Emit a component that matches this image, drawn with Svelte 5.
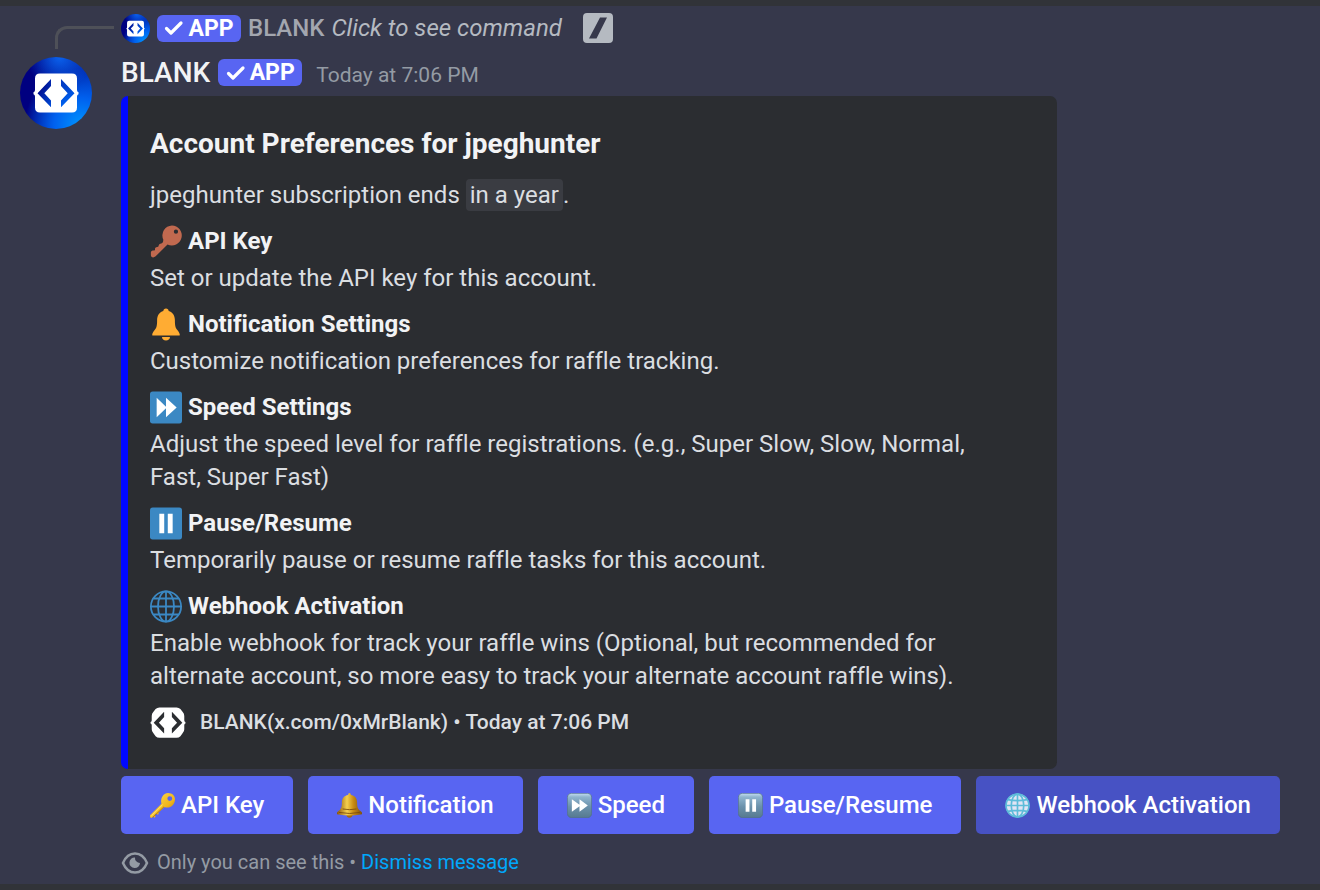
<script>
  let dismissed = $state(false);
  let activeButton = $state("webhook");

  const fields = [
    { icon: "key", name: "API Key", value: "Set or update the API key for this account." },
    { icon: "bell", name: "Notification Settings", value: "Customize notification preferences for raffle tracking." },
    { icon: "forward", name: "Speed Settings", value: "Adjust the speed level for raffle registrations. (e.g., Super Slow, Slow, Normal, Fast, Super Fast)" },
    { icon: "pause", name: "Pause/Resume", value: "Temporarily pause or resume raffle tasks for this account." },
    { icon: "globe", name: "Webhook Activation", value: "Enable webhook for track your raffle wins (Optional, but recommended for alternate account, so more easy to track your alternate account raffle wins)." }
  ];

  const buttons = [
    { id: "key", label: "API Key" },
    { id: "bell", label: "Notification" },
    { id: "forward", label: "Speed" },
    { id: "pause", label: "Pause/Resume" },
    { id: "webhook", label: "Webhook Activation" }
  ];
</script>

{#snippet logo()}
  <svg class="logo" viewBox="0 0 72 72" aria-hidden="true">
    <path fill="#fff" fill-rule="evenodd" d="M20 16.5h32q5 0 5 5v11.500q0 2 1.500 2.300v2q-1.500.3-1.500 2.300v11q0 5-5 5h-32q-5 0-5-5v-11q0-2-1.500-2.300v-2q1.500-.3 1.500-2.300v-11.500q0-5 5-5zM31 22l-13.500 14.300 13.500 14v-6.800l-6.700-7.200 6.700-7.300zM41 22v7l6.700 7.300-6.700 7.200v6.800l13.500-14z" />
  </svg>
{/snippet}

{#snippet badge()}
  <span class="badge">
    <svg viewBox="0 0 20 20" width="20" height="20" aria-hidden="true">
      <path d="M2.500 10.500L7 15 17 5" fill="none" stroke="#fff" stroke-width="3.200" stroke-linecap="round" stroke-linejoin="round" />
    </svg>
    APP
  </span>
{/snippet}

{#snippet fieldIcon(name)}
  <svg class="field-icon" viewBox="0 0 36 36" aria-hidden="true">
    {#if name === "key"}
      <path fill="#c1694f" fill-rule="evenodd" d="M24.700 0a11.200 11.200 0 1 1-5 21.300L6 35c-2 1.600-5 1-5-1.500v-3.500q0-1.500 2-2l2 .2q1-.7 .6-2.200.4-2 2.800-1.800 1.600-.2 1.400-2 .6-2 3-1.900 2.200-.8 2-2.800l.2-1.500A11.200 11.200 0 0 1 24.700 0zM29.200 4.600a2.400 2.400 0 1 0 0 4.800a2.400 2.400 0 0 0 0-4.800z" />
    {:else if name === "bell"}
      <path fill="#ffac33" d="M18 0c1.800 0 3 1.100 3 2.700C25.500 4 28 8 28 13c0 8 1 9 3 11.500 1.500 2 2.500 3.700 2.500 5 0 .8-.5 1-1 1h-29c-.5 0-1-.2-1-1 0-1.300 1-3 2.500-5C7 22 8 21 8 13c0-5 2.500-9 7-10.300C15 1.100 16.200 0 18 0zM13.500 32h9c0 2.500-2 4-4.500 4s-4.500-1.500-4.500-4z" />
    {:else if name === "forward"}
      <rect width="36" height="36" rx="3" fill="#3b88c3" />
      <path fill="#fff" d="M7.500 7l10.500 10.200V7l12 11-12 11V18.800L7.500 29z" />
    {:else if name === "pause"}
      <rect width="36" height="36" rx="3" fill="#3b88c3" />
      <path fill="#fff" d="M10.500 7H16v22h-5.500zM20 7h5.500v22H20z" />
    {:else}
      <g fill="none" stroke="#3b88c3" stroke-width="2">
        <circle cx="18" cy="18" r="17" />
        <ellipse cx="18" cy="18" rx="9" ry="17" />
        <path d="M18 1v34M1 18h34M4 9h28M4 27h28" />
      </g>
    {/if}
  </svg>
{/snippet}

{#snippet buttonIcon(name)}
  <svg class="button-icon" viewBox="0 0 36 36" aria-hidden="true">
    {#if name === "key"}
      <defs>
        <linearGradient id="key-gold" x1="0" y1="0" x2="1" y2="1">
          <stop offset="0" stop-color="#ffe25a" />
          <stop offset=".6" stop-color="#f0b51b" />
          <stop offset="1" stop-color="#a86b08" />
        </linearGradient>
      </defs>
      <path fill="url(#key-gold)" fill-rule="evenodd" d="M26 0c6 0 10 4 10 9 0 7-5 12-11 12-2 0-3-.5-4-1l-9 8.500.5 2-2 .5-1.500-1-2 2 1 2-1.500 1.500-2-1.500L2.500 36 0 35v-3l16.500-16.500C14.500 8 19 0 26 0zM28.500 4.500a3.500 3.500 0 1 0 0 7a3.500 3.500 0 0 0 0-7z" />
      <path d="M2 33L18 17" stroke="#fff08a" stroke-width="1.200" />
      <path d="M4 35L20 20" stroke="#9b6107" stroke-width="1" />
    {:else if name === "bell"}
      <defs>
        <linearGradient id="bell-gold">
          <stop offset="0" stop-color="#8a5208" />
          <stop offset=".4" stop-color="#f5cf4e" />
          <stop offset=".65" stop-color="#c98c14" />
          <stop offset="1" stop-color="#80500a" />
        </linearGradient>
      </defs>
      <circle cx="18" cy="31" r="4.500" fill="#a5690c" />
      <path fill="url(#bell-gold)" d="M16 3c0-4 4-4 4 0 6 1 9 5 9 11 0 7 1 9 6 13 2 2 1 4-1 4-10 2-22 2-32 0-2 0-3-2-1-4 5-4 6-6 6-13 0-6 3-10 9-11z" />
      <path d="M3 28q15 3 30 0M8 23q10 2 20 0" fill="none" stroke="#77480a" stroke-width="1.200" />
    {:else if name === "forward" || name === "pause"}
      <defs>
        <linearGradient id="tile-{name}" x1="0" y1="0" x2="0" y2="1">
          <stop offset="0" stop-color="#c4dff0" />
          <stop offset=".15" stop-color="#8fb5ce" />
          <stop offset=".55" stop-color="#6b91ab" />
          <stop offset="1" stop-color="#567a90" />
        </linearGradient>
      </defs>
      <rect x=".5" y=".5" width="35" height="35" rx="6" fill="url(#tile-{name})" stroke="#527187" />
      {#if name === "forward"}
        <path fill="#fff" d="M7 9l11 8V9l12 9-12 9v-8L7 27z" />
      {:else}
        <path fill="#fff" d="M11 9h5.500v18H11zM20.500 9H26v18h-5.500z" />
      {/if}
    {:else}
      <circle cx="18" cy="18" r="17" fill="#e1e4f4" />
      <g fill="none" stroke="#5dbcd9" stroke-width="2.400">
        <circle cx="18" cy="18" r="16.500" />
        <ellipse cx="18" cy="18" rx="9" ry="16.500" />
        <path d="M18 1v34M1 18h34M4 9.500q14 3 28 0M4 26.500q14-3 28 0" />
      </g>
    {/if}
  </svg>
{/snippet}

{#if !dismissed}
  <article class="message">
    <div class="spine"></div>
    <div class="reply">
      <span class="avatar small">{@render logo()}</span>
      {@render badge()}
      <span class="reply-name">BLANK</span>
      <a class="reply-text" href="#command">Click to see command</a>
      <svg class="slash" viewBox="0 0 30 30" aria-hidden="true">
        <path fill="#b5bac1" fill-rule="evenodd" d="M4 0h22q4 0 4 4v22q0 4-4 4H4q-4 0-4-4V4q0-4 4-4zM17 4.500L6 25.500h7.500L24 4.500z" />
      </svg>
    </div>

    <span class="avatar">{@render logo()}</span>
    <div class="content">
      <header>
        <span class="author">BLANK</span>
        {@render badge()}
        <time>Today at 7:06 PM</time>
      </header>

      <section class="embed">
        <h2>Account Preferences for jpeghunter</h2>
        <p class="description">jpeghunter subscription ends <span class="relative">in a year</span>.</p>
        {#each fields as field}
          <div class="field">
            <h3>{@render fieldIcon(field.icon)}{field.name}</h3>
            <p>{field.value}</p>
          </div>
        {/each}
        <footer>
          <svg class="footer-logo" viewBox="13 16 46 40" aria-hidden="true">
            <path fill="#fff" fill-rule="evenodd" d="M25 16.500h22q3 0 5 2l3 4q2 2 2 5v5.500q0 2 1.500 2.300v2q-1.500.3-1.500 2.300v5q0 3-2 5l-3 4q-2 2-5 2H25q-3 0-5-2l-3-4q-2-2-2-5v-5q0-2-1.500-2.300v-2q1.500-.3 1.500-2.300v-5.500q0-3 2-5l3-4q2-2 5-2zM31 22l-13.500 14.300 13.500 14v-6.800l-6.700-7.200 6.700-7.300zM41 22v7l6.700 7.300-6.700 7.200v6.800l13.500-14z" />
          </svg>
          <span>BLANK(x.com/0xMrBlank) • Today at 7:06 PM</span>
        </footer>
      </section>

      <div class="actions">
        {#each buttons as button}
          <button class:active={activeButton === button.id} onclick={() => (activeButton = button.id)}>
            {@render buttonIcon(button.id)}{button.label}
          </button>
        {/each}
      </div>

      <div class="note">
        <svg class="eye" viewBox="0 0 27 24" aria-hidden="true">
          <path d="M1.500 12C4 6 8.500 2.500 13.500 2.500S23 6 25.500 12C23 18 18.500 21.500 13.500 21.500S4 18 1.500 12z" fill="none" stroke="#949ba4" stroke-width="2.500" />
          <path d="M13.500 6.500a5 5 0 0 0 5 5.500a5.300 5.300 0 1 1-5-5.500z" fill="#949ba4" />
        </svg>
        <span>Only you can see this •</span>
        <button class="dismiss" onclick={() => (dismissed = true)}>Dismiss message</button>
      </div>
    </div>
  </article>
{/if}

<style>
  :global(body) {
    background: #313338;
    font-family: Roboto, "Liberation Sans", sans-serif;
    font-variant-ligatures: none;
  }

  h2, h3, p {
    margin: 0;
  }

  .message {
    display: grid;
    grid-template-columns: 121px 1fr;
    margin: 6px 0;
    padding-top: 7px;
    padding-bottom: 9px;
    background: #36384b;
    color: #dbdee1;
  }

  .spine {
    height: 20px;
    margin: 13px 7px 0 55px;
    border-top: 3px solid #4e5058;
    border-left: 3px solid #4e5058;
    border-top-left-radius: 12px;
  }

  .reply {
    display: flex;
    align-items: center;
    height: 30px;
    gap: 7px;
    font-size: 24px;
  }

  .reply-name {
    color: #a3a6af;
    font-weight: 500;
  }

  .reply-text {
    color: #b5bac1;
    font-style: italic;
    text-decoration: none;
  }

  .slash {
    width: 30px;
    height: 30px;
    margin-left: 14px;
  }

  .avatar {
    width: 72px;
    height: 72px;
    margin: 8px 0 0 20px;
    border-radius: 50%;
    background:
      radial-gradient(circle at 55% 0%, #0a62ee 0%, transparent 40%),
      radial-gradient(circle at 85% 95%, #0096ff 0%, #0060ee 30%, transparent 62%),
      linear-gradient(100deg, #000080 20%, #0030b8 90%);
  }

  .avatar.small {
    width: 29px;
    height: 29px;
    margin: 0;
  }

  .logo {
    display: block;
    width: 100%;
    height: 100%;
  }

  .badge {
    display: flex;
    align-items: center;
    justify-content: center;
    gap: 4px;
    width: 84px;
    height: 27px;
    border-radius: 6px;
    background: #5865f2;
    color: #fff;
    font-size: 23px;
    font-weight: 700;
  }

  header {
    display: flex;
    align-items: center;
    height: 47px;
    gap: 8px;
  }

  .author {
    color: #f2f3f5;
    font-size: 28px;
    font-weight: 500;
  }

  time {
    margin-left: 6px;
    padding-top: 4px;
    color: #949ba4;
    font-size: 21px;
  }

  .content {
    padding-right: 37px;
  }

  .embed {
    box-sizing: border-box;
    max-width: 936px;
    padding: 31px 56px 31px 22px;
    border-left: 7px solid #0008ff;
    border-radius: 7px;
    background: #2b2d31;
    font-size: 24px;
    line-height: 33px;
  }

  h2 {
    color: #f2f3f5;
    font-size: 28px;
    font-weight: 700;
    line-height: 34px;
  }

  .description {
    margin-top: 18px;
  }

  .relative {
    padding: 2px 4px;
    border-radius: 4px;
    background: #3a3c42;
  }

  .field {
    margin-top: 13px;
  }

  h3 {
    display: flex;
    align-items: center;
    gap: 6px;
    margin-bottom: 4px;
    color: #f2f3f5;
    font-size: 24px;
    font-weight: 700;
  }

  .field-icon {
    width: 32px;
    height: 33px;
  }

  footer {
    display: flex;
    align-items: center;
    gap: 14px;
    margin-top: 14px;
    height: 31px;
    font-size: 21px;
    font-weight: 500;
  }

  .footer-logo {
    width: 36px;
    height: 31px;
  }

  .actions {
    display: flex;
    flex-wrap: wrap;
    gap: 7px 15px;
    margin-top: 7px;
  }

  .actions button {
    display: flex;
    align-items: center;
    gap: 6px;
    height: 58px;
    padding: 0 29px;
    border: none;
    border-radius: 5px;
    background: #5865f2;
    color: #fff;
    font: 500 24px Roboto, "Liberation Sans", sans-serif;
    cursor: pointer;
  }

  .actions button.active,
  .actions button:hover {
    background: #4752c4;
  }

  .button-icon {
    width: 25px;
    height: 25px;
  }

  .note {
    display: flex;
    align-items: center;
    gap: 5px;
    margin-top: 16px;
    color: #949ba4;
    font-size: 20px;
    line-height: 25px;
  }

  .eye {
    width: 28px;
    height: 24px;
    margin-right: 3px;
  }

  .dismiss {
    padding: 0;
    border: none;
    background: none;
    color: #00a8fc;
    font: inherit;
    cursor: pointer;
  }
</style>
